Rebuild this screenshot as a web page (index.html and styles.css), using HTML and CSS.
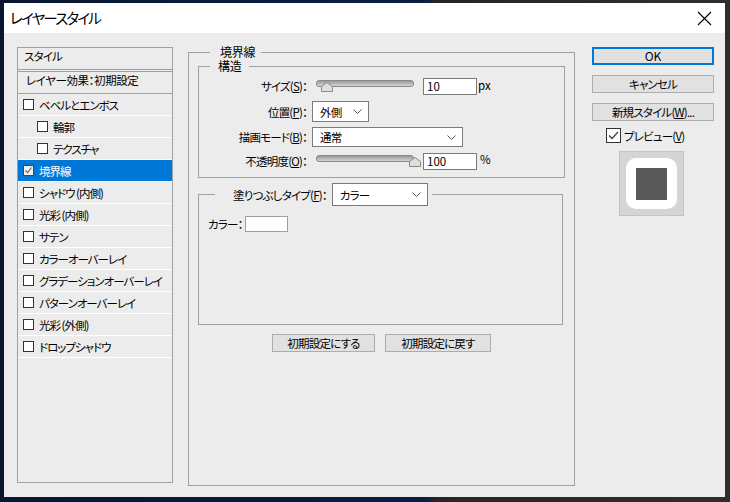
FILE: index.html
```html
<!DOCTYPE html>
<html lang="ja">
<head>
<meta charset="utf-8">
<title>レイヤースタイル</title>
<link rel="stylesheet" href="styles.css">
</head>
<body>
<div class="dialog">
  <div class="titlebar">
    <span class="title">レイヤースタイル</span>
    <svg class="close" width="15" height="15" viewBox="0 0 15 15"><path d="M1 1L14 14M14 1L1 14" stroke="#000" stroke-width="1.1" fill="none"/></svg>
  </div>
  <div class="content">
    <div class="list">
      <div class="list-head">スタイル</div>
      <div class="list-sub">レイヤー効果：初期設定</div>
      <div class="item"><span class="cb"></span>ベベルとエンボス</div>
      <div class="item indent"><span class="cb"></span>輪郭</div>
      <div class="item indent"><span class="cb"></span>テクスチャ</div>
      <div class="item selected"><span class="cb"><svg width="9" height="9" viewBox="0 0 9 9"><path d="M1.5 4.5L3.5 6.5L7.5 1.5" stroke="#6a6a6a" stroke-width="1.2" fill="none"/></svg></span>境界線</div>
      <div class="item"><span class="cb"></span>シャドウ (内側)</div>
      <div class="item"><span class="cb"></span>光彩 (内側)</div>
      <div class="item"><span class="cb"></span>サテン</div>
      <div class="item"><span class="cb"></span>カラーオーバーレイ</div>
      <div class="item"><span class="cb"></span>グラデーションオーバーレイ</div>
      <div class="item"><span class="cb"></span>パターンオーバーレイ</div>
      <div class="item"><span class="cb"></span>光彩 (外側)</div>
      <div class="item"><span class="cb"></span>ドロップシャドウ</div>
    </div>

    <fieldset class="group outer">
      <legend class="legend-outer">境界線</legend>
      <fieldset class="group struct">
        <legend class="legend-struct">構造</legend>
        <div class="rows">
          <div class="row r1">
            <span class="label">サイズ(<u>S</u>)：</span>
            <div class="slider"><span class="thumb" style="left:5px"><svg width="12" height="10" viewBox="0 0 12 10"><path d="M6 0.5L11.5 4.5V9.5H0.5V4.5Z" fill="#dedede" stroke="#8a8a8a"/></svg></span></div>
            <div class="num">10</div>
            <span class="unit">px</span>
          </div>
          <div class="row r2">
            <span class="label">位置(<u>P</u>)：</span>
            <div class="select sel-pos"><span>外側</span><svg width="9" height="5" viewBox="0 0 9 5"><path d="M0.5 0.5L4.5 4.5L8.5 0.5" stroke="#555" fill="none"/></svg></div>
          </div>
          <div class="row r3">
            <span class="label">描画モード(<u>B</u>)：</span>
            <div class="select sel-mode"><span>通常</span><svg width="9" height="5" viewBox="0 0 9 5"><path d="M0.5 0.5L4.5 4.5L8.5 0.5" stroke="#555" fill="none"/></svg></div>
          </div>
          <div class="row r4">
            <span class="label">不透明度(<u>O</u>)：</span>
            <div class="slider"><span class="thumb" style="left:93px"><svg width="12" height="10" viewBox="0 0 12 10"><path d="M6 0.5L11.5 4.5V9.5H0.5V4.5Z" fill="#dedede" stroke="#8a8a8a"/></svg></span></div>
            <div class="num">100</div>
            <span class="unit pct">%</span>
          </div>
        </div>
      </fieldset>

      <fieldset class="group fill">
        <legend class="legend-fill">
          <span>塗りつぶしタイプ(<u>F</u>)：</span>
          <div class="select sel-fill"><span>カラー</span><svg width="9" height="5" viewBox="0 0 9 5"><path d="M0.5 0.5L4.5 4.5L8.5 0.5" stroke="#555" fill="none"/></svg></div>
        </legend>
        <div class="fill-body">
          <div class="color-row"><span>カラー：</span><span class="swatch"></span></div>
        </div>
      </fieldset>

      <div class="reset-buttons">
        <div class="btn btn-a">初期設定にする</div>
        <div class="btn btn-b">初期設定に戻す</div>
      </div>
    </fieldset>

    <div class="side">
      <div class="btn ok">OK</div>
      <div class="btn cancel">キャンセル</div>
      <div class="btn newstyle">新規スタイル(<u>W</u>)...</div>
      <div class="preview-row">
        <span class="cb big"><svg width="13" height="13" viewBox="0 0 13 13"><path d="M2 6.5L5 9.5L11 3" stroke="#444" stroke-width="1.3" fill="none"/></svg></span>
        <span>プレビュー(<u>V</u>)</span>
      </div>
      <div class="preview">
        <div class="preview-white"><div class="preview-dark"></div></div>
      </div>
    </div>
  </div>
</div>
</body>
</html>
```

FILE: styles.css
```css
* { box-sizing: border-box; }
html, body { margin: 0; padding: 0; }
body {
  width: 730px;
  height: 502px;
  overflow: hidden;
  padding: 3px 5px 5px 4px;
  background: linear-gradient(90deg, #081631 0%, #0c1d44 58%, #262626 60%, #2e2e2e 100%);
  font-family: "Noto Sans CJK JP", "Noto Sans", sans-serif;
  font-size: 11.5px;
  letter-spacing: -0.8px;
  color: #000;
  font-feature-settings: "palt";
}
.dialog {
  width: 721px;
  height: 494px;
  background: #ececec;
  display: flex;
  flex-direction: column;
}
.titlebar {
  height: 30px;
  background: #fff;
  display: flex;
  align-items: center;
  justify-content: space-between;
  padding: 0 13px 0 6px;
}
.title { font-size: 14.5px; line-height: 18px; letter-spacing: -1.8px; }
.close { display: block; }

.content {
  display: flex;
  align-items: flex-start;
  padding: 12px 11px 0 13px;
}

/* left list */
.list {
  width: 156px;
  height: 436px;
  margin-top: 2px;
  border: 1px solid #a0a0a0;
}
.list-head {
  height: 24px;
  line-height: 16px;
  padding: 0 0 0 6px;
  border-bottom: 3px double #a0a0a0;
}
.list-sub {
  height: 22px;
  line-height: 14px;
  padding: 1px 0 0 8px;
  border-bottom: 1px solid #a0a0a0;
  letter-spacing: -0.4px;
}
.item {
  height: 22px;
  display: flex;
  align-items: center;
  padding-left: 5px;
  border-bottom: 1px solid #fff;
  line-height: 14px;
  white-space: nowrap;
  letter-spacing: -1px;
}
.item.indent { padding-left: 19px; }
.item.selected { background: #0078d7; color: #fff; }
.cb {
  width: 11px;
  height: 11px;
  border: 1px solid #333;
  background: #fff;
  margin-right: 5px;
  flex: none;
  display: flex;
  align-items: center;
  justify-content: center;
}
.cb svg { display: block; }
.item.selected .cb { border-color: #444; background: #f0f0f0; }

/* main fieldsets */
.group {
  margin: 0;
  padding: 0;
  min-width: 0;
  border: 1px solid #a0a0a0;
}
.group legend { line-height: 14px; }
.outer {
  width: 387px;
  height: 441px;
  margin-left: 15px;
  padding: 0 9px;
}
.legend-outer { padding: 0 6px 0 10px; margin-left: 12px; font-size: 12px; letter-spacing: -0.3px; }
.legend-struct { padding: 0 8px; margin-left: 11px; font-size: 12px; letter-spacing: -0.3px; }

.rows { padding: 3px 0 6px 0; display: flex; flex-direction: column; }
.row { display: flex; align-items: center; white-space: nowrap; }
.r1 { height: 20px; }
.r2 { height: 21px; margin-top: 5px; }
.r3 { height: 20px; margin-top: 5px; }
.r4 { height: 20px; margin-top: 4px; }
.label { width: 108px; text-align: right; line-height: 16px; }
u { text-decoration-thickness: 1px; text-underline-offset: 1px; }

.slider {
  position: relative;
  width: 98px;
  height: 10px;
  margin-left: 9px;
  margin-top: -4px;
}
.slider::before {
  content: "";
  position: absolute;
  left: 0; right: 0; top: 1px;
  height: 5px;
  border-radius: 3px;
  border: 1px solid #8a8a8a;
  background: linear-gradient(#9a9a9a, #d4d4d4);
}
.thumb { position: absolute; top: 3px; line-height: 0; }
.num {
  width: 54px;
  height: 17px;
  margin-left: 9px;
  background: #fff;
  border: 1px solid #7a7a7a;
  padding-left: 3px;
  line-height: 15px;
  letter-spacing: 0;
}
.unit { margin-left: 1px; line-height: 14px; margin-top: -2px; letter-spacing: 0; }
.unit.pct { margin-left: 3px; margin-top: -4px; }

.select {
  display: flex;
  align-items: center;
  justify-content: space-between;
  background: #fff;
  border: 1px solid #7a7a7a;
  padding: 0 6px 0 7px;
  line-height: 14px;
}
.select svg { display: block; }
.sel-pos { width: 57px; height: 21px; margin-left: 5px; }
.sel-mode { width: 151px; height: 20px; margin-left: 5px; }

.fill { margin: 5px 2px 0 0; }
.legend-fill {
  display: flex;
  align-items: center;
  padding: 0 4px 0 18px;
  margin-left: 16px;
  white-space: nowrap;
}
.sel-fill { width: 96px; height: 23px; margin-left: 5px; }
.fill-body { height: 118px; padding: 10px 0 0 9px; }
.color-row { display: flex; align-items: center; height: 16px; line-height: 14px; }
.swatch {
  width: 43px;
  height: 16px;
  margin-left: 3px;
  background: #fff;
  border: 1px solid #a0a0a0;
}

.btn {
  height: 18px;
  background: #e1e1e1;
  border: 1px solid #adadad;
  display: flex;
  align-items: center;
  justify-content: center;
  line-height: 14px;
  white-space: nowrap;
}
.reset-buttons {
  display: flex;
  justify-content: center;
  gap: 10px;
  margin-top: 9px;
}
.btn-a { width: 103px; }
.btn-b { width: 106px; }

/* right column */
.side {
  width: 122px;
  margin-left: 17px;
  display: flex;
  flex-direction: column;
}
.ok { margin-top: 2px; border: 2px solid #0078d7; letter-spacing: 0; font-size: 12px; }
.cancel, .newstyle { margin-top: 10px; }
.preview-row {
  display: flex;
  align-items: center;
  margin-top: 7px;
  padding-left: 14px;
  height: 15px;
  line-height: 14px;
}
.cb.big { width: 15px; height: 15px; margin-right: 3px; }
.preview {
  width: 65px;
  height: 65px;
  margin: 8px 0 0 27px;
  background: #d5d5d5;
  border: 1px solid #c4c4c4;
  padding: 6px;
}
.preview-white {
  width: 51px;
  height: 51px;
  background: #fff;
  border-radius: 10px;
  display: flex;
  align-items: center;
  justify-content: center;
}
.preview-dark { width: 31px; height: 32px; background: #595959; }
```
